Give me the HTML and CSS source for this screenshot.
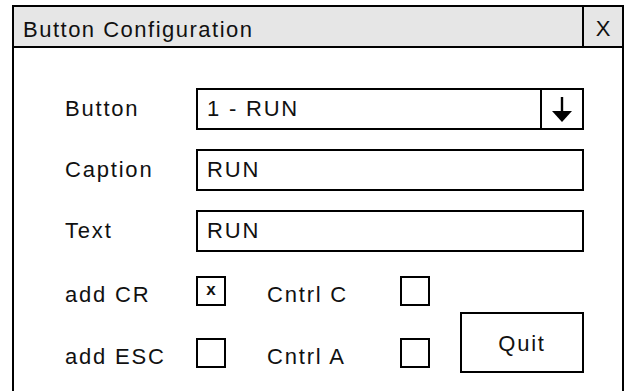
FILE: index.html
```html
<!DOCTYPE html>
<html lang="en">
<head>
  <meta charset="UTF-8" />
  <title>Button Configuration</title>
  <link rel="stylesheet" href="styles.css">
</head>
<body>
  <div class="window">
    <div class="titlebar">
      <div class="title">Button Configuration</div>
      <div class="close">X</div>
    </div>

    <div class="content">
      <div class="fields">
        <label>Button</label>
        <div class="select">
          <span class="select-value">1 - RUN</span>
          <span class="select-arrow">
            <svg width="24" height="30" viewBox="0 0 24 30">
              <line x1="12" y1="3" x2="12" y2="19" stroke="#000" stroke-width="2.4" />
              <polygon points="2,17 22,17 12,28" fill="#000" />
            </svg>
          </span>
        </div>

        <label>Caption</label>
        <div class="textbox">RUN</div>

        <label>Text</label>
        <div class="textbox">RUN</div>
      </div>

      <div class="options">
        <span class="opt-label">add CR</span>
        <span class="check">x</span>
        <span></span>
        <span class="opt-label">Cntrl C</span>
        <span class="check"></span>
        <span></span>
        <button class="quit">Quit</button>

        <span class="opt-label">add ESC</span>
        <span class="check"></span>
        <span></span>
        <span class="opt-label">Cntrl A</span>
        <span class="check"></span>
      </div>
    </div>
  </div>
</body>
</html>
```

FILE: styles.css
```css
body {
  margin: 0;
  background: #fff;
  font-family: "Liberation Sans", Arial, sans-serif;
  font-size: 22px;
  letter-spacing: 1.8px;
  color: #111;
}

.window {
  box-sizing: border-box;
  width: 612px;
  height: 400px;
  margin: 5px 0 0 12px;
  border: 2px solid #000;
  border-bottom: none;
}

.titlebar {
  display: flex;
  height: 39px;
  background: #e6e6e6;
  border-bottom: 2px solid #000;
}

.title {
  flex: 1;
  display: flex;
  align-items: center;
  padding-left: 9px;
  padding-top: 6px;
  letter-spacing: 1.5px;
}

.close {
  width: 38px;
  border-left: 2px solid #000;
  display: flex;
  align-items: center;
  justify-content: center;
  letter-spacing: 0;
  padding-top: 5px;
}

.content {
  padding: 40px 38px 0 51px;
}

.fields {
  display: grid;
  grid-template-columns: 131px 1fr;
  grid-auto-rows: 42px;
  row-gap: 19px;
  align-items: center;
}

.select,
.textbox {
  box-sizing: border-box;
  height: 42px;
  border: 2px solid #000;
  display: flex;
  align-items: center;
}

.select-value,
.textbox {
  padding-left: 9px;
}

.select-value {
  flex: 1;
}

.select-arrow {
  width: 40px;
  height: 100%;
  border-left: 2px solid #000;
  display: flex;
  align-items: center;
  justify-content: center;
}

.options {
  display: grid;
  grid-template-columns: 131px 30px 41px 133px 30px 30px 124px;
  grid-template-rows: 30px 30px;
  row-gap: 32px;
  align-items: center;
  margin-top: 24px;
}

.opt-label {
  padding-top: 7px;
}

.check {
  box-sizing: border-box;
  width: 30px;
  height: 30px;
  border: 2px solid #000;
  display: flex;
  align-items: center;
  justify-content: center;
  font-size: 17px;
  font-weight: bold;
  letter-spacing: 0;
  line-height: 1;
  padding-bottom: 3px;
}

.quit {
  grid-column: 7;
  grid-row: 1 / 3;
  align-self: start;
  margin-top: 36px;
  height: 61px;
  background: #fff;
  border: 2px solid #000;
  font-family: inherit;
  font-size: 22px;
  letter-spacing: 1.8px;
  color: #111;
  padding: 2px 0 0;
}
```
